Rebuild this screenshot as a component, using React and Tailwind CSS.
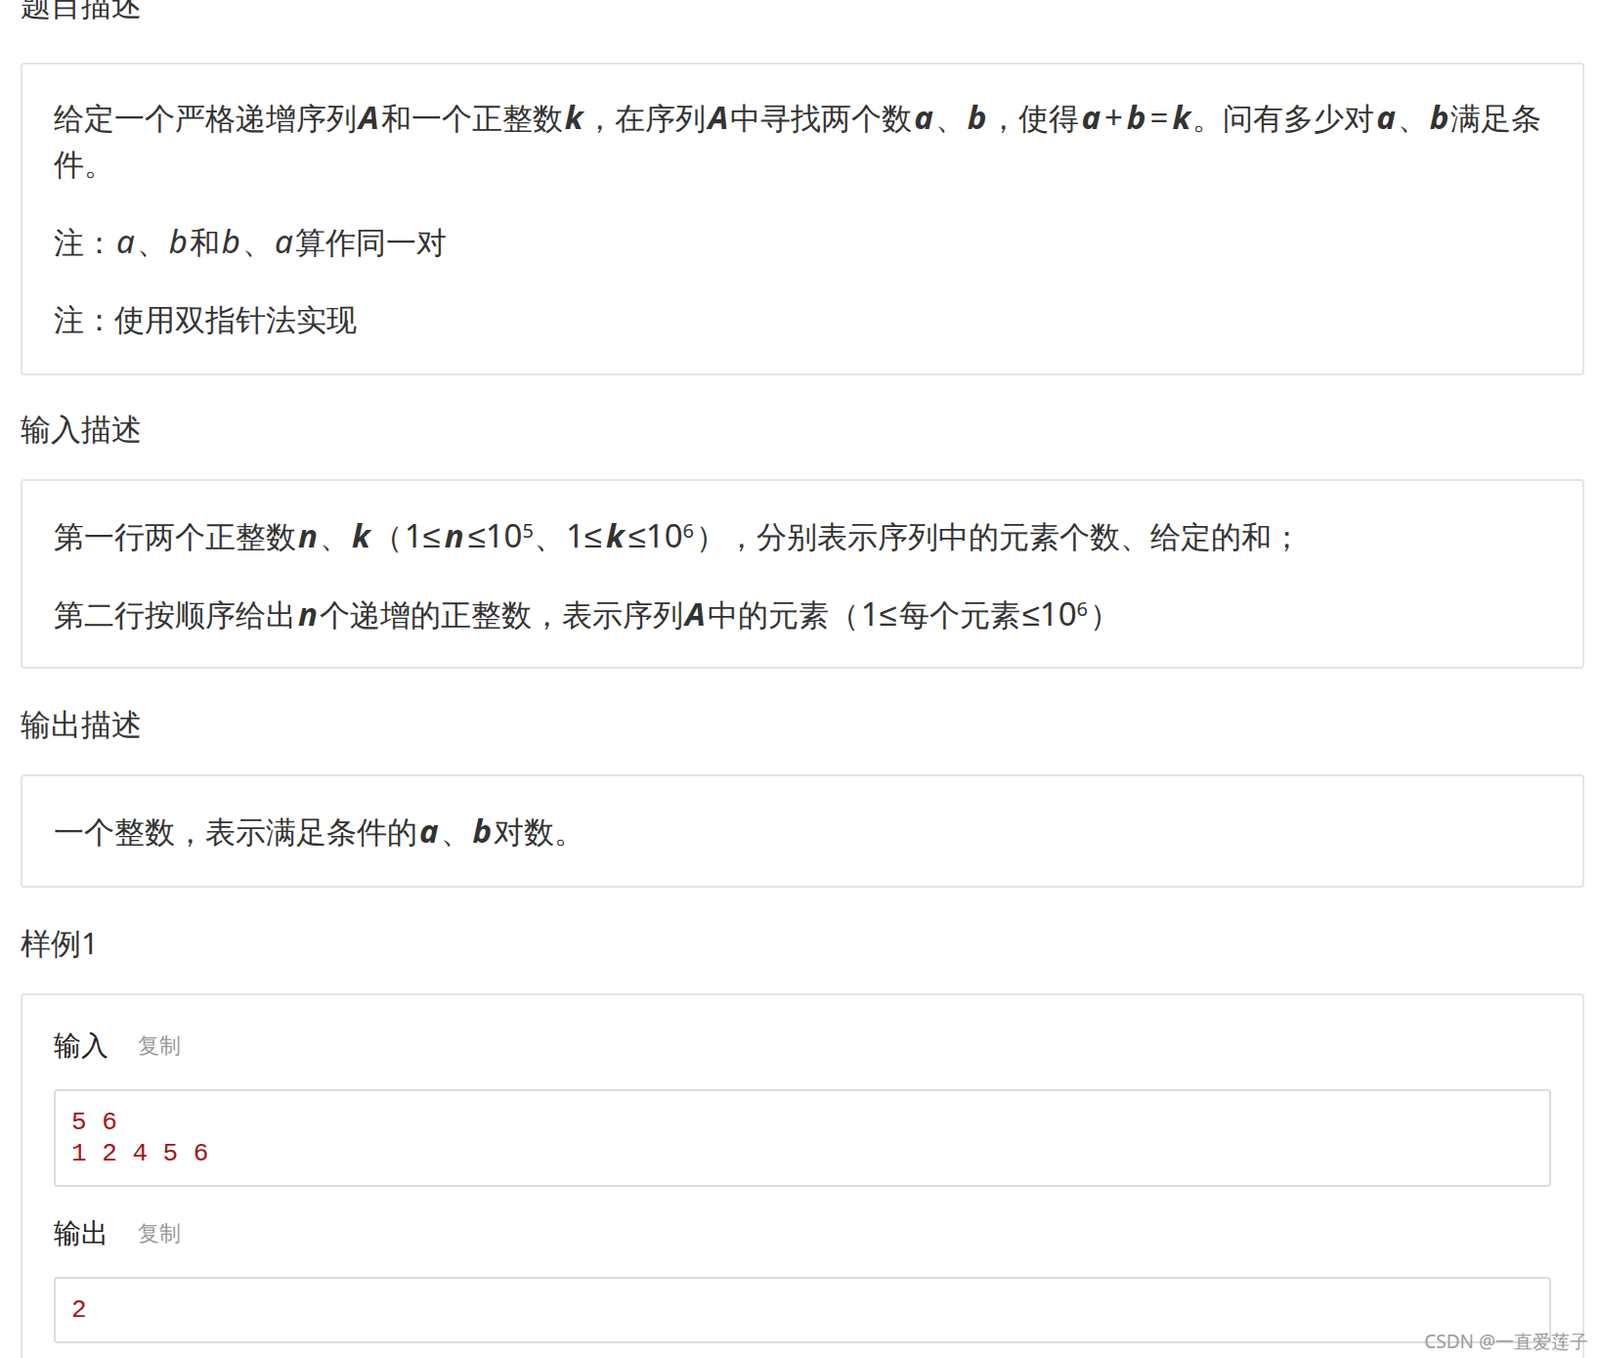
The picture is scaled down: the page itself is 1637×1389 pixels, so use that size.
import React from 'react';

const M = ({ children, b }) => (
    <span className={`italic ${b ? 'font-bold' : ''} font-['Liberation_Serif',serif] text-[33px] px-[2px]`}>{children}</span>
);
const N = ({ children }) => (
    <span className="font-['Liberation_Serif',serif] text-[33px] px-[2px]">{children}</span>
);

const Heading = ({ children, className = '' }) => (
    <h3 className={`text-[31px] leading-[40px] text-[#333] ${className}`}>{children}</h3>
);

const Box = ({ children, className = '' }) => (
    <div className={`border-2 border-[#e5e5e5] rounded-[4px] px-[32px] ${className}`}>{children}</div>
);

const Sample = ({ label, value }) => (
    <>
        <div className="flex items-center gap-[30px] h-[40px]">
            <span className="text-[28px] text-[#222]">{label}</span>
            <span className="text-[22px] text-[#999]">复制</span>
        </div>
        <pre className="mt-[26px] border-2 border-[#ddd] rounded-[4px] px-[16px] py-[16px] text-[26px] leading-[32px] text-[#a3151a] font-['Liberation_Serif',serif]">{value}</pre>
    </>
);

export default function App() {
    return (
        <div className="relative w-[1637px] h-[1389px] overflow-hidden bg-white text-[#333] font-['Noto_Sans_CJK_SC','Noto_Sans',sans-serif]">
            <div className="pl-[21px] pr-[16px] -mt-[16px]">
                <Heading>题目描述</Heading>
                <Box className="mt-[40px] pt-[30px] pb-[32px] text-[31px] leading-[47px]">
                    <p>给定一个严格递增序列<M b>A</M>和一个正整数<M b>k</M>，在序列<M b>A</M>中寻找两个数<M b>a</M>、<M b>b</M>，使得<M b>a</M><N>+</N><M b>b</M><N>=</N><M b>k</M>。问有多少对<M b>a</M>、<M b>b</M>满足条件。</p>
                    <p className="mt-[32px]">注：<M>a</M>、<M>b</M>和<M>b</M>、<M>a</M>算作同一对</p>
                    <p className="mt-[32px]">注：使用双指针法实现</p>
                </Box>
                <Heading className="mt-[34px]">输入描述</Heading>
                <Box className="mt-[32px] pt-[32px] pb-[30px] text-[31px] leading-[47px]">
                    <p>第一行两个正整数<M b>n</M>、<M b>k</M>（<N>1≤</N><M b>n</M><N>≤10<sup className="text-[20px]">5</sup>、1≤</N><M b>k</M><N>≤10<sup className="text-[20px]">6</sup></N>），分别表示序列中的元素个数、给定的和；</p>
                    <p className="mt-[32px]">第二行按顺序给出<M b>n</M>个递增的正整数，表示序列<M b>A</M>中的元素（<N>1≤</N>每个元素<N>≤10<sup className="text-[20px]">6</sup></N>）</p>
                </Box>
                <Heading className="mt-[36px]">输出描述</Heading>
                <Box className="mt-[32px] pt-[32px] pb-[32px] text-[31px] leading-[47px]">
                    <p>一个整数，表示满足条件的<M b>a</M>、<M b>b</M>对数。</p>
                </Box>
                <Heading className="mt-[36px]">样例1</Heading>
                <Box className="mt-[32px] pt-[30px] pb-[40px]">
                    <Sample label="输入" value={'5 6\n1 2 4 5 6'} />
                    <div className="mt-[26px]"><Sample label="输出" value="2" /></div>
                </Box>
            </div>
            <div className="absolute right-[12px] top-[1358px] text-[19px] text-[#9a9a9a] font-['Liberation_Sans','Noto_Sans_CJK_SC',sans-serif]">CSDN @一直爱莲子</div>
        </div>
    );
}
